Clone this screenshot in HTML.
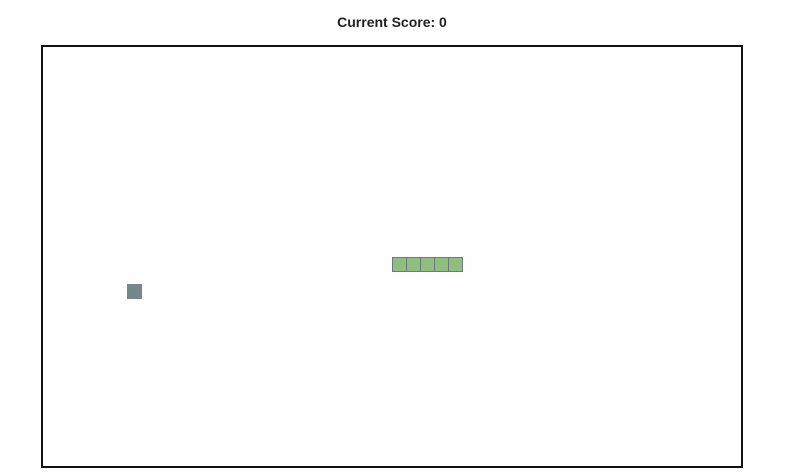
<!DOCTYPE html>
<html><head><style>
body{margin:0;background:#fff;width:800px;height:475px;position:relative;overflow:hidden;font-family:"Liberation Sans",sans-serif}
.t{position:absolute;top:14px;left:0;width:784px;text-align:center;font-weight:bold;font-size:14px;color:#222}
.b{position:absolute;left:41px;top:45px;width:698px;height:419px;border:2px solid #111;background:#fefefe}
.s{position:absolute;top:257px;width:13px;height:13px;background:#8fbf80;border:1px solid #6a7a80}
.f{position:absolute;left:127px;top:284px;width:15px;height:15px;background:#76878c}
</style></head><body>
<div class="t">Current Score: 0</div>
<div class="b"></div>
<div class="s" style="left:392px"></div>
<div class="s" style="left:406px"></div>
<div class="s" style="left:420px"></div>
<div class="s" style="left:434px"></div>
<div class="s" style="left:448px"></div>
<div class="f"></div>
</body></html>
